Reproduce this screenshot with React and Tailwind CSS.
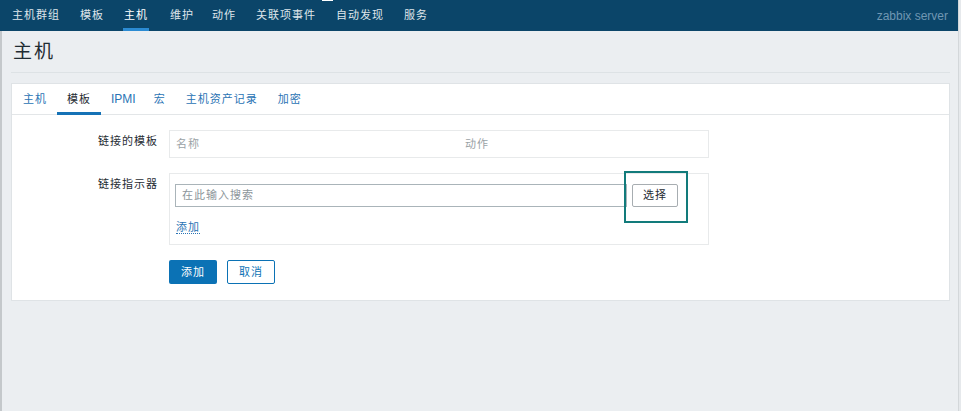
import React from 'react';

const navItems = ['主机群组', '模板', '主机', '维护', '动作', '关联项事件', '自动发现', '服务'];
const tabs = ['主机', '模板', 'IPMI', '宏', '主机资产记录', '加密'];

export default function App() {
  return (
    <div className="relative h-[411px] w-[961px] overflow-hidden bg-[#ebeef1] font-['Liberation_Sans','Noto_Sans_CJK_SC',sans-serif] text-[#1f2c33]">
      {/* Top nav */}
      <div className="relative flex h-[31px] items-stretch bg-[#0b4569] pl-[12px] pr-[13px]">
        <div className="absolute left-[322px] top-0 h-px w-[11px] bg-white" />
        <div className="flex items-stretch gap-[20px]">
          {navItems.map((item) => (
            <div
              key={item}
              className={
                'relative flex items-center text-[11px] tracking-[1px] ' +
                (item === '主机' ? 'text-white' : 'text-[#dfe6eb]') +
                (item === '维护' ? ' ml-[2px]' : '') +
                (item === '动作' ? ' ml-[-2px]' : '')
              }
            >
              {item}
              {item === '主机' && (
                <div className="absolute -left-px -right-px bottom-0 h-[3px] bg-[#2b8bd3]" />
              )}
            </div>
          ))}
        </div>
        <div className="ml-auto flex items-center text-[12px] text-[#7097b3]">zabbix server</div>
      </div>

      {/* Header */}
      <div className="mx-[11px] flex h-[42px] items-center border-b border-[#dde2e5] pl-[2px]">
        <h1 className="text-[19px] font-normal leading-none tracking-[2px]">主机</h1>
      </div>

      {/* Card */}
      <div className="mx-[11px] mt-[10px] border border-[#dfe3e6] bg-white">
        <div className="flex h-[31px] items-stretch border-b border-[#e3e6e8] pl-px">
          {tabs.map((tab) => (
            <div
              key={tab}
              className={
                'relative flex items-center px-[10px] ' +
                (tab === '模板' ? 'text-[#1f2c33]' : 'text-[#2a73b4]') +
                (tab === 'IPMI' ? ' text-[12px] pr-[8px]' : ' text-[11px] tracking-[1px]')
              }
            >
              {tab}
              {tab === '模板' && <div className="absolute bottom-[-1px] left-0 right-0 h-[3px] bg-[#1572b6]" />}
            </div>
          ))}
        </div>

        <div className="grid grid-cols-[146px_540px] gap-x-[11px] gap-y-[15px] pb-[16px] pt-[15px]">
          <div className="pt-[4px] text-right text-[11px] leading-[14px] tracking-[1px]">链接的模板</div>
          <div className="flex h-[28px] items-center border border-[#e8eaeb] text-[11px] tracking-[1px] text-[#9aa2a6]">
            <div className="w-[295px] pl-[6px]">名称</div>
            <div>动作</div>
          </div>

          <div className="pt-[4px] text-right text-[11px] leading-[14px] tracking-[1px]">链接指示器</div>
          <div className="relative h-[72px] border border-[#e8eaeb] pl-[5px] pt-[10px]">
            <div className="flex gap-[5px]">
              <div className="flex h-[23px] w-[452px] items-center border border-[#aab4b9] pl-[6px] text-[11px] tracking-[1px] text-[#8d969b]">
                在此输入搜索
              </div>
              <button className="flex h-[23px] w-[46px] items-center justify-center rounded-[2px] border border-[#a7adb1] bg-white text-[11px] tracking-[1px] text-[#1f2c33]">
                选择
              </button>
            </div>
            <div className="mt-[7px] pl-px">
              <span className="border-b border-dotted border-[#2a73b4] text-[11px] leading-[14px] tracking-[1px] text-[#2a73b4]">添加</span>
            </div>
            <div className="absolute left-[454px] top-[-3px] h-[52px] w-[64px] border-2 border-[#127b7b]" />
          </div>

          <div />
          <div className="flex gap-[10px]">
            <button className="flex h-[24px] w-[48px] items-center justify-center rounded-[2px] bg-[#0b72b5] text-[11px] tracking-[1px] text-white">
              添加
            </button>
            <button className="flex h-[24px] w-[48px] items-center justify-center rounded-[2px] border border-[#0b72b5] bg-white text-[11px] tracking-[1px] text-[#0b72b5]">
              取消
            </button>
          </div>
        </div>
      </div>

      {/* window edges */}
      <div className="absolute bottom-0 left-0 top-[31px] w-[2px] bg-[#c4c8cb]" />
      <div className="absolute bottom-0 right-0 top-0 w-[3px] border-l border-[#d3d7da] bg-[#e6e9ec]" />
    </div>
  );
}
